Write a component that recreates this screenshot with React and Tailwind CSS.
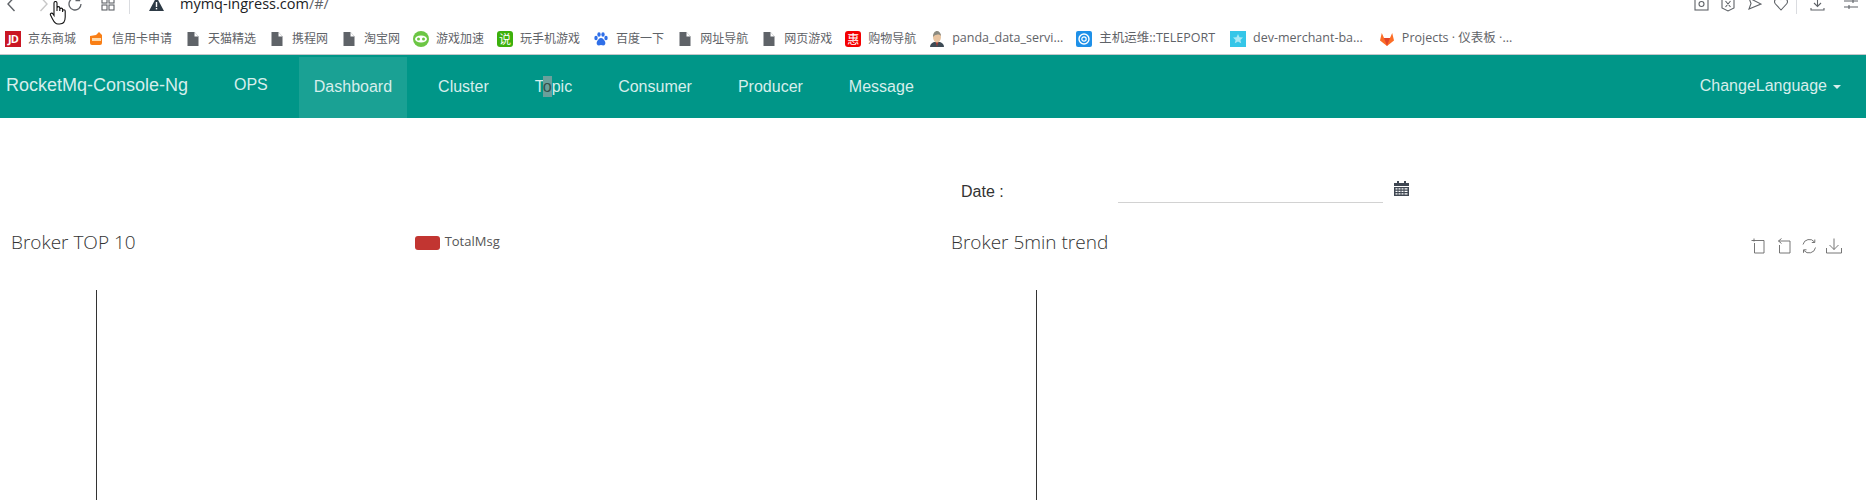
import { Fragment } from 'react'

function FileIcon() {
  return (
    <svg width="16" height="16" viewBox="0 0 16 16">
      <path d="M2.500 1h7l4 4.500V15h-11z" fill="#5f6368" />
      <path d="M9.500 1v4.500h4z" fill="#fff" />
    </svg>
  )
}

function JdIcon() {
  return <div className="w-4 h-4 bg-[#c91623] text-white text-[11px] font-bold leading-4 text-center tracking-[-1px]">JD</div>
}

function CardIcon() {
  return (
    <svg width="16" height="16" viewBox="0 0 16 16">
      <path d="M1 5l6-1 3-3 3 3v8a2 2 0 0 1-2 2H3a2 2 0 0 1-2-2z" fill="#f97e15" />
      <rect x="3" y="7" width="9" height="3" fill="#ffd9a8" />
    </svg>
  )
}

function GameIcon() {
  return (
    <svg width="16" height="16" viewBox="0 0 16 16">
      <circle cx="8" cy="8" r="8" fill="#6cc644" />
      <ellipse cx="8" cy="8" rx="6" ry="3.500" fill="#fff" />
      <circle cx="5.500" cy="8" r="1.500" fill="#6cc644" />
      <circle cx="10.500" cy="8" r="1.500" fill="#6cc644" />
    </svg>
  )
}

function PlayIcon() {
  return <div className="w-4 h-4 rounded-[3px] bg-[#3cb00c] text-white text-[12px] leading-4 text-center font-['Noto_Sans_CJK_SC']">说</div>
}

function BaiduIcon() {
  return (
    <svg width="16" height="16" viewBox="0 0 16 16" fill="#2f6fe8">
      <ellipse cx="3" cy="7" rx="1.700" ry="2.200" />
      <ellipse cx="6" cy="3.500" rx="1.700" ry="2.300" />
      <ellipse cx="10" cy="3.500" rx="1.700" ry="2.300" />
      <ellipse cx="13" cy="7" rx="1.700" ry="2.200" />
      <path d="M8 7c-2 0-3 2-4 3.500-1 2 0 4 2 4 1 0 1.500-.4 2-.4s1 .4 2 .4c2 0 3-2 2-4C11 9 10 7 8 7z" />
    </svg>
  )
}

function HuiIcon() {
  return <div className="w-4 h-4 rounded-[3px] bg-[#f40000] text-white text-[12px] leading-4 text-center font-['Noto_Sans_CJK_SC']">惠</div>
}

function JenkinsIcon() {
  return (
    <svg width="16" height="16" viewBox="0 0 16 16">
      <path d="M1 16c0-3 2-4 4-5h6c2 1 4 2 4 5z" fill="#3d4a55" />
      <path d="M7 11l1 5 1-5z" fill="#c0392b" />
      <ellipse cx="8" cy="6" rx="4" ry="5.500" fill="#e8c4a0" />
      <path d="M4 6c0-4 2-6 4-6s4 2 4 5c-2-2-5-2-8 1z" fill="#8a8a80" />
    </svg>
  )
}

function TeleportIcon() {
  return (
    <svg width="16" height="16" viewBox="0 0 16 16">
      <rect width="16" height="16" rx="2" fill="#1e90e8" />
      <circle cx="8" cy="8" r="5" fill="none" stroke="#fff" strokeWidth="1.400" />
      <circle cx="8" cy="8" r="2.200" fill="none" stroke="#fff" strokeWidth="1.200" />
    </svg>
  )
}

function MerchantIcon() {
  return (
    <svg width="16" height="16" viewBox="0 0 16 16">
      <rect width="16" height="16" fill="#35c6e8" />
      <path d="M8 3l1.500 3.200 3.500.4-2.600 2.300.8 3.400L8 10.500l-3.200 1.800.8-3.400L3 6.600l3.500-.4z" fill="#a7e8f5" />
    </svg>
  )
}

function GitlabIcon() {
  return (
    <svg width="16" height="16" viewBox="0 0 16 16">
      <path d="M8 15L1 9.500 2.800 2l2.200 5h6l2.200-5L15 9.500z" fill="#fc6d26" />
      <path d="M8 15L5 7h6z" fill="#e24329" />
    </svg>
  )
}

const bookmarks = [
  { label: '京东商城', Icon: JdIcon },
  { label: '信用卡申请', Icon: CardIcon },
  { label: '天猫精选', Icon: FileIcon },
  { label: '携程网', Icon: FileIcon },
  { label: '淘宝网', Icon: FileIcon },
  { label: '游戏加速', Icon: GameIcon },
  { label: '玩手机游戏', Icon: PlayIcon },
  { label: '百度一下', Icon: BaiduIcon },
  { label: '网址导航', Icon: FileIcon },
  { label: '网页游戏', Icon: FileIcon },
  { label: '购物导航', Icon: HuiIcon },
  { label: 'panda_data_servi...', Icon: JenkinsIcon, size: 'text-[12.5px]' },
  { label: '主机运维::TELEPORT', Icon: TeleportIcon, size: 'text-[12.5px]' },
  { label: 'dev-merchant-ba...', Icon: MerchantIcon, size: 'text-[12.5px] ml-[2px]' },
  { label: 'Projects · 仪表板 ·...', Icon: GitlabIcon, size: 'text-[12.5px] ml-[3px]' },
]

const navItems = ['Cluster', 'Topic', 'Consumer', 'Producer', 'Message']

function ToolIcons() {
  return (
    <div className="flex items-center gap-[9px] text-[#666]">
      <svg width="16" height="16" viewBox="0 0 16 16" fill="none" stroke="currentColor" strokeWidth="0.900">
        <path d="M3 0.500v3M0.500 2.500h12.500v12.500H3.500V5" />
      </svg>
      <svg width="16" height="16" viewBox="0 0 16 16" fill="none" stroke="currentColor" strokeWidth="0.900">
        <path d="M5.500 0.500L2.500 3l3 2.500M2.500 3H14v12H3.500V7" />
      </svg>
      <svg width="16" height="16" viewBox="0 0 16 16" fill="none" stroke="currentColor" strokeWidth="0.900">
        <path d="M2 6.500A6.500 6.500 0 0 1 13.500 4M14.500 9.500A6.500 6.500 0 0 1 3 12.500" />
        <path d="M13.800 1.500v3h-3M2.500 14.800v-3h3" />
      </svg>
      <svg width="16" height="16" viewBox="0 0 16 16" fill="none" stroke="currentColor" strokeWidth="0.900">
        <path d="M8 0.500v11M3.500 7L8 11.500 12.500 7M0.500 10v5h15v-5" />
      </svg>
    </div>
  )
}

function ChartPanel({ title, legend, tools }) {
  return (
    <div className="flex flex-col flex-1 min-w-0">
      <div className="h-[61px] flex items-start">
        <div className="text-[19px] leading-[26px] pl-[11px] font-light text-[#333] font-['Open_Sans']">{title}</div>
        {legend && (
          <div className="flex items-center gap-[5px] ml-[279px] mt-[2px] h-[24px]">
            <div className="w-[25px] h-[14px] rounded-[3px] bg-[#c23531]" />
            <span className="text-[13px] text-[#555] font-['Open_Sans'] -mt-[2px]">{legend}</span>
          </div>
        )}
        {tools && (
          <div className="ml-auto mr-[24px] mt-[9px]">
            <ToolIcons />
          </div>
        )}
      </div>
      <div className="ml-[96px] flex-1 border-l border-[#333]" />
    </div>
  )
}

export default function App() {
  return (
    <div className="h-[500px] w-[1866px] overflow-hidden bg-white relative flex flex-col font-['Liberation_Sans',sans-serif]">

      {/* Browser chrome, cut off by the top of the capture */}
      <div className="h-[28px] overflow-hidden shrink-0">
        <div className="h-[24px] -mt-[8px] flex items-center text-[#5f6368]">
          <svg className="ml-[6px]" width="10" height="18" viewBox="0 0 10 18" fill="none" stroke="currentColor" strokeWidth="1.400"><path d="M8.500 2L2 9l6.500 7" /></svg>
          <svg className="ml-[23px] text-[#c8c8c8]" width="10" height="18" viewBox="0 0 10 18" fill="none" stroke="currentColor" strokeWidth="1.400"><path d="M1.500 2L8 9l-6.500 7" /></svg>
          <svg className="ml-[18px]" width="16" height="16" viewBox="0 0 16 16" fill="none" stroke="currentColor" strokeWidth="1.300"><path d="M14 8a6 6 0 1 1-2-4.500M12.500 0.500v4h-4" /></svg>
          <svg className="ml-[18px]" width="14" height="18" viewBox="0 0 14 18" fill="none" stroke="currentColor" strokeWidth="1.100"><rect x="1" y="3" width="5" height="5" /><rect x="8" y="3" width="5" height="5" /><rect x="1" y="10" width="5" height="5" /><rect x="8" y="10" width="5" height="5" /></svg>
          <div className="ml-[14px] w-px h-[20px] bg-[#dadce0]" />
          <svg className="ml-[19px]" width="15" height="14" viewBox="0 0 15 14"><path d="M7.500 0L15 14H0z" fill="#2d3a45" /><rect x="6.800" y="5" width="1.400" height="5" fill="#fff" /><rect x="6.800" y="11" width="1.400" height="1.400" fill="#fff" /></svg>
          <span className="ml-[16px] text-[14.5px] text-[#202124] font-['Open_Sans']">mymq-ingress.com<span className="text-[#5f6368]">/#/</span></span>
          <div className="ml-auto flex items-center">
            <svg width="15" height="18" viewBox="0 0 15 18" fill="none" stroke="currentColor" strokeWidth="1.100"><rect x="1" y="2" width="13" height="13" /><circle cx="7.500" cy="9" r="2.500" /></svg>
            <svg className="ml-[12px]" width="14" height="18" viewBox="0 0 14 18" fill="none" stroke="currentColor" strokeWidth="1.100"><path d="M1 2h12v11l-6 3-6-3zM4.500 6l5 6M9.500 6l-5 6" /></svg>
            <svg className="ml-[13px]" width="14" height="18" viewBox="0 0 14 18" fill="none" stroke="currentColor" strokeWidth="1.100"><path d="M1 3l12 6-12 5 2-5.500z" /></svg>
            <svg className="ml-[12px]" width="14" height="18" viewBox="0 0 14 18" fill="none" stroke="currentColor" strokeWidth="1.100"><path d="M7 15L1.500 9A3.500 3.500 0 0 1 7 4.500 3.500 3.500 0 0 1 12.500 9z" /></svg>
            <div className="ml-[8px] w-px h-[20px] bg-[#dadce0]" />
            <svg className="ml-[13px]" width="15" height="18" viewBox="0 0 15 18" fill="none" stroke="currentColor" strokeWidth="1.100"><path d="M7.500 3v8M4 8l3.500 3.500L11 8M1 13v2h13v-2" /></svg>
            <svg className="ml-[19px] mr-[8px]" width="14" height="18" viewBox="0 0 14 18" fill="none" stroke="currentColor" strokeWidth="1.100"><path d="M0 6h14M0 12h14M9 4v4M5 10v4" /></svg>
          </div>
        </div>
      </div>

      {/* Bookmarks bar */}
      <div className="h-[27px] shrink-0 flex items-center gap-[13px] pl-[5px] pb-[5px] border-b border-[#c4c7ca] text-[12px] text-[#5f6368] font-['Open_Sans','Noto_Sans_CJK_SC',sans-serif]">
        {bookmarks.map(({ label, Icon, size }) => (
          <div key={label} className={`flex items-center gap-[7px] whitespace-nowrap ${size || ''}`}>
            <Icon />
            <span>{label}</span>
          </div>
        ))}
      </div>

      {/* Navbar */}
      <nav className="h-[63px] shrink-0 bg-[#009688] flex text-[#d6eeec] text-[16px]">
        <div className="pl-[6px] w-[219px] text-[18px] leading-[60px]">RocketMq-Console-Ng</div>
        <div className="px-[15px] leading-[59px]">OPS</div>
        <div className="flex pt-[2px] ml-4 gap-4">
          <div className="px-[15px] bg-white/10 leading-[60px]">Dashboard</div>
          {navItems.map(name => (
            <div key={name} className="px-[15px] leading-[60px]">
              {name === 'Topic' ? (
                <Fragment>T<span className="bg-[#6aa09b] text-[#33504d] py-[2px]">o</span>pic</Fragment>
              ) : name}
            </div>
          ))}
        </div>
        <div className="ml-auto pr-[25px] leading-[62px] flex items-start gap-[6px]">
          <span>ChangeLanguage</span>
          <span className="mt-[30px] border-x-[4px] border-x-transparent border-t-[4px] border-t-[#d6eeec]" />
        </div>
      </nav>

      {/* Date picker */}
      <div className="h-[111px] shrink-0 flex items-start pl-[961px] text-[#333]">
        <div className="w-[157px] text-[16px] leading-[24px] mt-[62px]">Date :</div>
        <div className="w-[265px] h-[30px] mt-[55px] border-b border-[#d2d2d2]" />
        <svg className="ml-[11px] mt-[63px] text-[#3f4752]" width="15" height="15" viewBox="0 0 15 15" fill="currentColor">
          <path d="M0 2h3V0h2v2h5V0h2v2h3v3H0z" />
          <path fillRule="evenodd" d="M0 6h15v9H0zM1.500 7.200v1.300h2V7.200zm3 0v1.300h2V7.200zm3 0v1.300h2V7.200zm3 0v1.300h3V7.200zM1.500 9.800v1.300h2V9.800zm3 0v1.300h2V9.800zm3 0v1.300h2V9.800zm3 0v1.300h3V9.800zM1.500 12.300v1.300h2v-1.300zm3 0v1.300h2v-1.300zm3 0v1.300h2v-1.300zm3 0v1.300h3v-1.300z" />
        </svg>
      </div>

      {/* Charts */}
      <div className="flex-1 flex min-h-0">
        <div className="w-[940px] shrink-0 flex">
          <ChartPanel title="Broker TOP 10" legend="TotalMsg" />
        </div>
        <div className="flex-1 flex min-w-0">
          <ChartPanel title="Broker 5min trend" tools />
        </div>
      </div>

      {/* Mouse pointer caught in the capture */}
      <svg className="absolute left-[49px] top-[1px]" width="18" height="24" viewBox="0 0 18 24" fill="#fff" stroke="#111" strokeWidth="1.100">
        <path d="M5 2a1.500 1.500 0 0 1 3 0v8V7a1.400 1.400 0 0 1 2.800 0v3-1.500a1.400 1.400 0 0 1 2.800 0V11v-1a1.300 1.300 0 0 1 2.600 0v6c0 4-2 7-5.500 7H9c-3 0-4-2-5.500-5L1.500 14c-.8-1.600 1.500-2.700 2.500-1l1 1.500z" />
      </svg>
    </div>
  )
}
